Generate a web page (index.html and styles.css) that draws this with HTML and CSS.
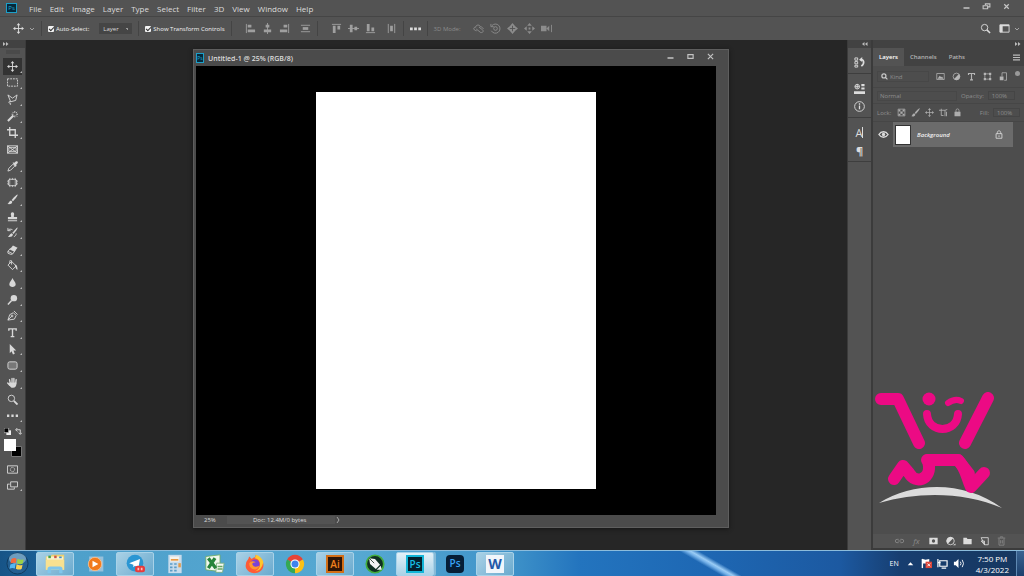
FILE: index.html
```
<!DOCTYPE html>
<html lang="en">
<head>
  <meta charset="UTF-8">
  <title>Untitled-1 @ 25% (RGB/8)</title>
  <link rel="stylesheet" href="styles.css">
</head>
<body>

  <header class="menubar">
    <span class="ps-logo">Ps</span>
    <nav class="menu">
      <button>File</button>
      <button>Edit</button>
      <button>Image</button>
      <button>Layer</button>
      <button>Type</button>
      <button>Select</button>
      <button>Filter</button>
      <button>3D</button>
      <button>View</button>
      <button>Window</button>
      <button>Help</button>
    </nav>
    <div class="window-buttons">
      <button aria-label="Minimize"><svg viewBox="0 0 12 12"><path d="M2 8h8" stroke-width="2"/></svg></button>
      <button aria-label="Restore"><svg viewBox="0 0 12 12"><path d="M4.500 4V2.500h6v4H8M1.500 5h6v4h-6z" stroke-width="1.500"/></svg></button>
      <button aria-label="Close"><svg viewBox="0 0 12 12"><path d="M3 3l6 6M9 3l-6 6" stroke-width="1.600"/></svg></button>
    </div>
  </header>

  <div class="options">
    <svg class="icon" viewBox="0 0 12 12"><path d="M6 2v8M2 6h8"/><path class="fill" d="M6 0l2 2.500H4zM6 12l2-2.500H4zM0 6l2.500-2v4zM12 6L9.500 4v4z"/></svg>
    <svg class="chevron" viewBox="0 0 6 6"><path d="M1 2l2 2 2-2"/></svg>
    <span class="sep"></span>
    <label class="check"><input type="checkbox" checked>Auto-Select:</label>
    <select class="target" aria-label="Auto-select target"><option>Layer</option><option>Group</option></select>
    <span class="sep"></span>
    <label class="check"><input type="checkbox" checked>Show Transform Controls</label>
    <span class="sep"></span>
    <div class="group align">
      <button aria-label="Align left"><svg class="icon" viewBox="0 0 12 12"><path d="M1.500 1v10"/><path class="fill" d="M3 2h4v3H3zM3 7h8v3H3z"/></svg></button>
      <button aria-label="Align centers"><svg class="icon" viewBox="0 0 12 12"><path d="M6 0v12"/><path class="fill" d="M4 2h4v3H4zM2 7h8v3H2z"/></svg></button>
      <button aria-label="Align right"><svg class="icon" viewBox="0 0 12 12"><path d="M10.500 1v10"/><path class="fill" d="M5 2h4v3H5zM1 7h8v3H1z"/></svg></button>
    </div>
    <button class="dim" aria-label="Distribute vertically"><svg class="icon" viewBox="0 0 12 12"><path d="M1 2.500h10M1 9.500h10"/><path class="fill" d="M3 4.500h6v3H3z"/></svg></button>
    <span class="sep"></span>
    <div class="group align">
      <button aria-label="Align top"><svg class="icon" viewBox="0 0 12 12"><path d="M1 1.500h10"/><path class="fill" d="M2 3h3v8H2zM7 3h3v4H7z"/></svg></button>
      <button aria-label="Align middles"><svg class="icon" viewBox="0 0 12 12"><path d="M0 6h12"/><path class="fill" d="M2 2h3v8H2zM7 4h3v4H7z"/></svg></button>
      <button aria-label="Align bottom"><svg class="icon" viewBox="0 0 12 12"><path d="M1 10.500h10"/><path class="fill" d="M2 1h3v8H2zM7 5h3v4H7z"/></svg></button>
    </div>
    <button class="dim" aria-label="Distribute horizontally"><svg class="icon" viewBox="0 0 12 12"><path d="M2.500 1v10M9.500 1v10"/><path class="fill" d="M4.500 3h3v6h-3z"/></svg></button>
    <span class="sep"></span>
    <button aria-label="More options"><svg class="icon" viewBox="0 0 12 12"><path class="fill" d="M0 5h3v3H0zM4.500 5h3v3h-3zM9 5h3v3H9z"/></svg></button>
    <span class="sep"></span>
    <span class="mode">3D Mode:</span>
    <div class="group modes">
      <svg class="icon" viewBox="0 0 12 12"><path d="M4 8.500C0 8 0 4.500 3 4.500c0-3 5-3 5 0M3.500 6.500l5 4c3 0 3-2 2-3l-4-3M8.500 3.500l3 3"/></svg>
      <svg class="icon" viewBox="0 0 12 12"><path d="M2 3a5 5 0 1 1-.5 5.500M1 1v3h3"/><circle cx="6" cy="6" r="2"/></svg>
      <svg class="icon" viewBox="0 0 12 12"><path class="fill" d="M6 0l2.500 3L9 3.500 12 6 9 8.500 6 12 3 8.500 0 6l3-2.500z"/><path class="cut" d="M6 3v6M3 6h6"/></svg>
      <svg class="icon" viewBox="0 0 12 12"><path class="fill" d="M6 0l2.500 3h-5zM6 12l2.500-3h-5zM0 6l3-2.500v5zM12 6L9 3.500v5zM5 5h2v2H5z"/></svg>
      <svg class="icon" viewBox="0 0 12 12"><path class="fill" d="M0 3h6v6H0zM6 6l3-3v6z"/><path d="M11.500 2v8"/></svg>
    </div>
    <div class="options-end">
      <button aria-label="Search"><svg class="icon" viewBox="0 0 12 12"><circle cx="5" cy="5" r="3.500"/><path d="M7.500 7.500L11 11" stroke-width="1.600"/></svg></button>
      <button aria-label="Workspace"><svg class="icon" viewBox="0 0 12 12"><path d="M1 2h10v8H1z"/><path class="fill" d="M1 2h10v1.500H1zM1 2h3v8H1z"/></svg></button>
      <svg class="chevron" viewBox="0 0 6 6"><path d="M1 2l2 2 2-2"/></svg>
    </div>
  </div>

  <main class="main">

    <aside class="toolbar">
      <div class="strip"><svg class="arrows" viewBox="0 0 6 6"><path d="M0 1l2.500 2L0 5zM3 1l2.500 2L3 5z"/></svg></div>
      <div class="grip"></div>
      <div class="tools">
        <button class="tool active" aria-label="Move"><svg class="icon" viewBox="0 0 12 12"><path d="M6 2v8M2 6h8"/><path class="fill" d="M6 0l2 2.500H4zM6 12l2-2.500H4zM0 6l2.500-2v4zM12 6L9.500 4v4z"/></svg></button>
        <button class="tool" aria-label="Marquee"><svg class="icon" viewBox="0 0 12 12"><path d="M.5 2h11v8H.5z" stroke-dasharray="2 1"/></svg></button>
        <button class="tool" aria-label="Lasso"><svg class="icon" viewBox="0 0 12 12"><path d="M1 1l5 3.500L11 1 9.500 7 4 8.500zM4 8.500c-2-1-3 1-1 1.500s1 1.500 0 2"/></svg></button>
        <button class="tool" aria-label="Magic wand"><svg class="icon" viewBox="0 0 12 12"><path d="M1 11l6-6" stroke-width="2.200"/><path d="M8.500 0v2M8.500 5v2M5 3.500h2M10 3.500h2M10 2l1-1M6 1l1 1M10 5l1 1"/></svg></button>
        <button class="tool" aria-label="Crop"><svg class="icon" viewBox="0 0 12 12"><path d="M3 0v9h9M0 3h9v9" stroke-width="1.400"/></svg></button>
        <button class="tool plain" aria-label="Frame"><svg class="icon" viewBox="0 0 12 12"><path d="M.5 2h11v8H.5zM.5 2l11 8M11.500 2L.5 10M2 4v4h8V4z"/></svg></button>
        <button class="tool" aria-label="Eyedropper"><svg class="icon" viewBox="0 0 12 12"><path d="M1 11l1-3 4.500-4.500 2 2L4 10z"/><path class="fill" d="M6 2l1-.500 1 .5 1.500-1.500c1.500-1 3 .5 2 2L10 4l.5 1-1 1.500z"/></svg></button>
        <button class="tool" aria-label="Patch"><svg class="icon" viewBox="0 0 12 12"><rect x="1.500" y="2.500" width="9" height="7" rx="2"/><path d="M3 1v10M6 1v2M6 9v2M9 1v10M0 4.500h2M0 7.500h2M10 4.500h2M10 7.500h2" stroke-width=".7"/></svg></button>
        <button class="tool" aria-label="Brush"><svg class="icon" viewBox="0 0 12 12"><path class="fill" d="M11.500.5c.8.6-2.500 5-5 7.500L5 6.500C7 4 11 0 11.500.5zM4.300 7l1.500 1.500C5.500 11 3 11.500.5 11 2 10 2 7.500 4.300 7z"/></svg></button>
        <button class="tool" aria-label="Stamp"><svg class="icon" viewBox="0 0 12 12"><path class="fill" d="M4.500 5C2.500 0 9.500 0 7.500 5v1.500H11V9H1V6.500h3.500zM1 10h10v1.200H1z"/></svg></button>
        <button class="tool" aria-label="History brush"><svg class="icon" viewBox="0 0 12 12"><path class="fill" d="M11.500.5c.8.6-2 4.500-4.500 7L5.800 6.300C8 4 11 0 11.500.5zM5 6.800l1.500 1.500c-.5 2.500-3 3-5.500 2.500C2.500 9.800 3 7.300 5 6.800z"/><path d="M1 4c1-2 3-2 5-1M1 1v3h3M10 7c0 2-1 3-2.500 3.500"/></svg></button>
        <button class="tool" aria-label="Eraser"><svg class="icon" viewBox="0 0 12 12"><path class="fill" d="M6.500 1.500L11.500 4 8 8.500 3 6z"/><path d="M4 4.500L1 8v2l3 1.300 2-.3 3-4M1 8l5 2.500"/></svg></button>
        <button class="tool" aria-label="Paint bucket"><svg class="icon" viewBox="0 0 12 12"><path d="M1 5.500l4-4 5 5L6 10.500zM3 4V1.500C3-.5 5 0 5 1.500V5"/><path class="fill" d="M9 5c2 1 2.500 3 2.500 5.500-2 0-1.500-2-3-4z"/></svg></button>
        <button class="tool" aria-label="Blur"><svg class="icon" viewBox="0 0 12 12"><path class="fill" d="M6 1c1 3 3.500 4 3.500 7 0 4-7 4-7 0C2.500 5 5 4 6 1z"/></svg></button>
        <button class="tool" aria-label="Dodge"><svg class="icon" viewBox="0 0 12 12"><circle class="fill" cx="7.500" cy="4.500" r="3.500"/><path d="M5 7l-4 4.500" stroke-width="1.600"/></svg></button>
        <button class="tool" aria-label="Pen"><svg class="icon" viewBox="0 0 12 12"><path d="M1 11l2-6 4-2 3 3-2 4zM1 11l4-4M7.500 1l4 4"/><circle cx="5.500" cy="6.500" r="1"/></svg></button>
        <button class="tool" aria-label="Type"><svg class="icon" viewBox="0 0 12 12"><path d="M2 4V2h8v2M6 2v8.500M4 10.500h4" stroke-width="1.500"/></svg></button>
        <button class="tool" aria-label="Path selection"><svg class="icon" viewBox="0 0 12 12"><path class="fill" d="M3 0l7 7H7l1.500 3.500-2 1L5 8l-2 2z"/></svg></button>
        <button class="tool" aria-label="Rectangle"><svg class="icon" viewBox="0 0 12 12"><rect x="1" y="2" width="10" height="8" rx="2" fill="#777"/></svg></button>
        <button class="tool" aria-label="Hand"><svg class="icon" viewBox="0 0 12 12"><path d="M3.500 7L2.800 3M5.500 6V1.500M7.500 6V1.500M9.500 7l.5-4M3 9L.8 6.500" stroke-width="1.500" stroke-linecap="round"/><path class="fill" d="M2 7.500l1-1.500h7.300C10.500 10 9 11.800 6.500 11.800S3 10 2 7.500z"/></svg></button>
        <button class="tool plain" aria-label="Zoom"><svg class="icon" viewBox="0 0 12 12"><circle cx="4.800" cy="4.800" r="3.500"/><path d="M7.500 7.500l4 4" stroke-width="2"/></svg></button>
        <button class="tool" aria-label="Edit toolbar"><svg class="icon" viewBox="0 0 12 12"><path class="fill" d="M0 5h2.500v2.500H0zM4.750 5h2.500v2.500h-2.500zM9.500 5H12v2.500H9.500z"/></svg></button>
      </div>
      <div class="swap">
        <svg class="mini" viewBox="0 0 6 6"><path d="M2 2h4v4H2z" fill="#eee"/><path d="M0 0h4v4H0z" fill="#000" stroke="#ccc" stroke-width=".6"/></svg>
        <svg class="mini" viewBox="0 0 6 6"><path d="M1 1.500h3.500V5M2 0L.5 1.500 2 3M3 4l1.500 1.500L6 4" fill="none" stroke="#ddd" stroke-width=".8"/></svg>
      </div>
      <svg class="swatches" viewBox="0 0 18 18"><path d="M7.500 7.500h10v10h-10z" fill="#000" stroke="#777"/><path d="M0 0h12v12H0z" fill="#fff"/></svg>
      <button class="tool plain" aria-label="Quick mask"><svg class="icon" viewBox="0 0 12 12"><path d="M.5 2h11v8H.5z"/><circle cx="6" cy="6" r="2.300" stroke-dasharray="1 .6"/></svg></button>
      <button class="tool" aria-label="Screen mode"><svg class="icon" viewBox="0 0 12 12"><path d="M4 2h7.500v5.500H4z"/><path d="M3 4.500H.5V10H8V8"/></svg></button>
    </aside>

    <section class="workspace">
      <article class="doc">
        <div class="doc-title">
          <span class="ps-logo small">Ps</span>
          <h1>Untitled-1 @ 25% (RGB/8)</h1>
          <div class="window-buttons">
            <button aria-label="Minimize document"><svg viewBox="0 0 12 12"><path d="M2 8h8" stroke-width="2"/></svg></button>
            <button aria-label="Maximize document"><svg viewBox="0 0 12 12"><path d="M2.500 3.500h7v5h-7z" stroke-width="1.500"/></svg></button>
            <button aria-label="Close document"><svg viewBox="0 0 12 12"><path d="M2.500 2.500l7 7M9.500 2.500l-7 7" stroke-width="1.500"/></svg></button>
          </div>
        </div>
        <div class="canvas"><div class="artboard"></div></div>
        <div class="doc-status">
          <span class="zoom">25%</span>
          <span class="size">Doc: 12.4M/0 bytes</span>
          <svg class="chevron" viewBox="0 0 6 6"><path d="M2 0l2 3-2 3"/></svg>
        </div>
      </article>
    </section>

    <aside class="dock">
      <div class="strip end"><svg class="arrows" viewBox="0 0 6 6"><path d="M2.500 1L0 3l2.500 2zM5.500 1L3 3l2.500 2z"/></svg></div>
      <div class="dock-group">
        <button aria-label="History"><svg class="icon" viewBox="0 0 12 12"><path d="M1 1h3v2.500H1zM1 5h3v2.500H1zM1 9h3v2H1z"/><path d="M7 3c4-1 5 4 1 7" stroke-width="1.800"/><path class="fill" d="M5.500 3L9 0v5.500z"/></svg></button>
      </div>
      <div class="dock-group">
        <button aria-label="Properties"><svg class="icon" viewBox="0 0 12 12"><circle cx="3.500" cy="4" r="2.500"/><path d="M1 4h5M3.500 1v5"/><path class="fill" d="M8 1h3.500v2.500H8zM8 5h3.500v2H8zM0 9h12v3H0z"/></svg></button>
        <button aria-label="Info"><svg class="icon" viewBox="0 0 12 12"><circle cx="6" cy="6" r="5.300"/><path d="M6 5v4M6 2.500v1.500" stroke-width="1.400"/></svg></button>
      </div>
      <div class="dock-group">
        <button aria-label="Character" class="letter caret">A</button>
        <button aria-label="Paragraph" class="letter pilcrow">¶</button>
      </div>
    </aside>

    <aside class="panel">
      <div class="strip end"><svg class="arrows" viewBox="0 0 6 6"><path d="M0 1l2.500 2L0 5zM3 1l2.500 2L3 5z"/></svg></div>
      <div class="tabs">
        <button class="tab active">Layers</button>
        <button class="tab">Channels</button>
        <button class="tab">Paths</button>
        <button class="panel-menu" aria-label="Panel menu"><svg class="mini" viewBox="0 0 6 6"><path d="M0 1h6M0 3h6M0 5h6" stroke="#bbb"/></svg></button>
      </div>
      <div class="row filter">
        <div class="kind">
          <svg class="mini" viewBox="0 0 12 12"><circle cx="5" cy="5" r="3.500" fill="none" stroke="#ccc" stroke-width="2"/><path d="M7.500 7.500L11 11" stroke="#ccc" stroke-width="2"/></svg>
          <select aria-label="Filter kind"><option>Kind</option></select>
        </div>
        <svg class="icon" viewBox="0 0 12 12"><path d="M1 2h10v8H1z"/><path class="fill" d="M2 9l3-4 2 2 1-1 2 3z"/></svg>
        <svg class="icon" viewBox="0 0 12 12"><circle cx="6" cy="6" r="4.500"/><path class="fill" d="M9.200 2.800a4.500 4.500 0 0 1-6.400 6.400z"/></svg>
        <svg class="icon" viewBox="0 0 12 12"><path d="M2 4V2h8v2M6 2v8.500M4 10.500h4" stroke-width="1.500"/></svg>
        <svg class="icon" viewBox="0 0 12 12"><path d="M2.500 2.500h7v7h-7z"/><path class="fill" d="M1 1h3v3H1zM8 1h3v3H8zM1 8h3v3H1zM8 8h3v3H8z"/></svg>
        <svg class="icon" viewBox="0 0 12 12"><path d="M4 6V1h6v10H7"/><path class="fill" d="M1 6h5v5H1z"/></svg>
        <span class="toggle"></span>
      </div>
      <div class="row blend">
        <select class="mode-select" aria-label="Blend mode" disabled><option>Normal</option></select>
        <label for="opacity">Opacity:</label>
        <input id="opacity" type="text" value="100%" disabled>
      </div>
      <div class="row locks">
        <span class="lock-label">Lock:</span>
        <svg class="icon" viewBox="0 0 12 12"><path d="M1.500 1.500h9v9h-9z"/><path class="fill" d="M2 2h2.500v2.500H2zM7.500 2H10v2.500H7.500zM4.500 4.500h3v3h-3zM2 7.500h2.500V10H2zM7.500 7.500H10V10H7.500z"/></svg>
        <svg class="icon" viewBox="0 0 12 12"><path class="fill" d="M11.500.5c.8.6-2.500 5-5 7.500L5 6.500C7 4 11 0 11.500.5zM4.300 7l1.500 1.500C5.500 11 3 11.500.5 11 2 10 2 7.500 4.300 7z"/></svg>
        <svg class="icon" viewBox="0 0 12 12"><path d="M6 2v8M2 6h8"/><path class="fill" d="M6 0l2 2.500H4zM6 12l2-2.500H4zM0 6l2.500-2v4zM12 6L9.500 4v4z"/></svg>
        <svg class="icon" viewBox="0 0 12 12"><path d="M0 3h8v8M3 1v9h3M8 3l3-1M10 5v6" stroke-width="1.200"/></svg>
        <svg class="icon" viewBox="0 0 12 12"><path d="M4 6V3c0-2.500 4-2.500 4 0v3"/><path class="fill" d="M2 5h8v6H2z"/></svg>
        <label for="fill">Fill:</label>
        <input id="fill" type="text" value="100%" disabled>
      </div>
      <div class="layer">
        <button class="eye" aria-label="Toggle visibility"><svg class="icon" viewBox="0 0 12 12"><path d="M1 6c2.500-4 7.500-4 10 0-2.500 4-7.500 4-10 0z" stroke-width="1.500"/><circle class="fill" cx="6" cy="6" r="1.800"/></svg></button>
        <div class="layer-body">
          <span class="thumb"></span>
          <span class="layer-name">Background</span>
          <svg class="icon" viewBox="0 0 12 12"><path d="M4 5V3.500c0-2.500 4-2.500 4 0V5M2.500 5h7v5.500h-7zM6 7v2"/></svg>
        </div>
      </div>
      <div class="panel-footer">
        <button class="off" aria-label="Link layers"><svg class="icon" viewBox="0 0 12 12"><path d="M5 4H3a2 2 0 0 0 0 4h2M7 4h2a2 2 0 0 1 0 4H7M4 6h4"/></svg></button>
        <button class="fx" aria-label="Layer style">fx</button>
        <button aria-label="Add mask"><svg class="icon" viewBox="0 0 12 12"><path class="fill" fill-rule="evenodd" d="M1 2h10v8H1zM8 6a2 2 0 1 0-4 0 2 2 0 1 0 4 0z"/></svg></button>
        <button aria-label="Adjustment layer"><svg class="icon" viewBox="0 0 12 12"><circle cx="6" cy="6" r="4.500"/><path class="fill" d="M9.200 2.800a4.500 4.500 0 0 0-6.400 6.400zM9 11h3V9z"/></svg></button>
        <button aria-label="New group"><svg class="icon" viewBox="0 0 12 12"><path class="fill" d="M1 2h4l1 1.500h5V10H1z"/></svg></button>
        <button aria-label="New layer"><svg class="icon" viewBox="0 0 12 12"><path d="M2 2h8.500v8.500H6zM6 10.500V6H2z"/></svg></button>
        <button class="off" aria-label="Delete layer"><svg class="icon" viewBox="0 0 12 12"><path d="M1.500 2.500h9M4.500 2V1h3v1M3 3v8h6V3M5 5v4M7 5v4"/></svg></button>
      </div>

      <svg class="watermark" viewBox="0 0 128 120">
        <path d="M4 111C40 89 90 89 127 116C90 100 44 99 4 111z" fill="#dcdcdc"/>
        <g fill="none" stroke="#ec0a84" stroke-width="12" stroke-linecap="round" stroke-linejoin="round">
          <path d="M6 7h17L44 51M113 6L90 51"/>
          <path d="M19 87L28 74L34 81C41 93 55 87 54 74L53 68H83C91 76 91 84 96 95L109 81"/>
          <path d="M52 68H83L94 82" />
          <path d="M52 22c1 20 30 20 31 0" stroke-width="8"/>
          <path d="M73 11q7-5 13-2" stroke-width="6"/>
        </g>
        <circle cx="54" cy="7" r="6.500" fill="#ec0a84"/>
      </svg>
    </aside>
  </main>

  <footer class="taskbar">
    <button class="start" aria-label="Start">
      <svg viewBox="0 0 24 24">
        <circle cx="12" cy="12" r="11" fill="#245f91" stroke="#123b5d"/>
        <ellipse cx="12" cy="7" rx="9" ry="6" fill="#9fc6dd" opacity=".6"/>
        <path d="M5.500 7.500q3-2 5.500-.5l-.8 4.500q-3-1-5.500.5z" fill="#f2693c"/>
        <path d="M12 7q3 2 6.500.5l-1 4.500q-3 1.500-6.300-.3z" fill="#98cf49"/>
        <path d="M4.500 13q3-1.500 5.500-.4l-.8 4.600q-3-1.200-5.500.4z" fill="#53b8f3"/>
        <path d="M11 12.700q3 2 6.300.5l-1 4.600q-3 1.300-6-.4z" fill="#fbd150"/>
      </svg>
    </button>
    <div class="tasks">
      <button class="task open" aria-label="Explorer"><svg viewBox="0 0 24 24"><path d="M1 3h6l1-2h15v18H1z" fill="#efcf6a"/><path d="M2 3h20v4H2z" fill="#fbf2ce"/><path d="M4 2h3v3H4z" fill="#44a148"/><path d="M11 2h3v3h-3z" fill="#cc5748"/><path d="M17 3h3v2h-3z" fill="#3c8fc9"/><path d="M1 7h22v12H1z" fill="#f8e190"/><path d="M3 23v-5q0-3 3-3h12q3 0 3 3v5h-4v-4H7v4z" fill="#7fc6ec"/></svg></button>
      <button class="task" aria-label="Media player"><svg viewBox="0 0 24 24"><path d="M5 3h17v18H5z" fill="#a9c9de" opacity=".8"/><circle cx="12" cy="12" r="8" fill="#f17a1d" stroke="#f9c391"/><path d="M9 8l7 4-7 4z" fill="#fff"/></svg></button>
      <button class="task open" aria-label="Telegram"><svg viewBox="0 0 24 24"><circle cx="12" cy="11" r="10" fill="#2a96d3"/><path d="M5 11l13-5-2 11-4-3-2 2v-3z" fill="#fff"/><rect x="12" y="14" width="12" height="8" rx="3" fill="#e83b3b"/><path d="M15 18h2M19 18h2" stroke="#fbb" stroke-width="3"/></svg></button>
      <button class="task" aria-label="Calculator"><svg viewBox="0 0 24 24"><path d="M4 1h16v22H4z" fill="#c8dcec"/><path d="M6 3h11v6H6z" fill="#f6f3ea"/><path d="M7 7h9" stroke="#e99842" stroke-width="2"/><path d="M6 12h3M11 12h3M6 16h3M11 16h3M6 20h3M11 20h3" stroke="#5b9cc6" stroke-width="2"/><path d="M16 11h3v5h-3z" fill="#df9b4a"/></svg></button>
      <button class="task" aria-label="Excel"><svg viewBox="0 0 24 24"><path d="M1 3l17-2v20L1 19z" fill="#f0f7ed" stroke="#6cab63"/><path d="M14 11h9l-2 11h-8z" fill="#f4faf3" stroke="#7cad79"/><path d="M15 15h6M15 18h6" stroke="#65a562" stroke-width="2"/><path d="M4 5l9 12M12 5L4 17" stroke="#27843c" stroke-width="4"/></svg></button>
      <button class="task open" aria-label="Firefox"><svg viewBox="0 0 24 24"><path d="M4 6l1-3 3 3q2-2 4-2l1-3q2 3 5 4 5 4 4 10c-2 10-18 11-21 1Q0 10 4 6z" fill="#ff5b36"/><path d="M13 1q7 2 9 9-2 10-10 11 6-3 6-8 0-7-6-8z" fill="#ffc72b"/><circle cx="12" cy="12" r="5.500" fill="#7a43d6"/><path d="M5 11q3-4 8-1-5 0-4 3 2 4 8 1-2 6-8 4-4-2-4-7z" fill="#ff982e"/></svg></button>
      <button class="task" aria-label="Chrome"><svg viewBox="0 0 24 24"><path d="M12 12L2.500 6.500a11 11 0 0 1 19 0z" fill="#e84335"/><path d="M12 12l9.500-5.500A11 11 0 0 1 12 23z" fill="#fbc116"/><path d="M12 12v11A11 11 0 0 1 2.500 6.500z" fill="#35a853"/><path d="M12 12h7L12 23z" fill="#fbc116"/><circle cx="12" cy="12" r="5.500" fill="#fff"/><circle cx="12" cy="12" r="4.200" fill="#3f83ee"/></svg></button>
      <button class="task open"><span class="app ai">Ai</span></button>
      <button class="task" aria-label="CorelDRAW"><svg viewBox="0 0 24 24"><circle cx="12" cy="12" r="10.500" fill="#102f22" stroke="#43ad3c" stroke-width="2"/><path d="M5 5l7 1 6 7-5 5-7-6z" fill="#f4f4f4"/><path d="M19 14l1 5-6 0z" fill="#f4f4f4"/><path d="M5 5l6 6" stroke="#22372d"/></svg></button>
      <button class="task open current"><span class="app pscc">Ps</span></button>
      <button class="task"><span class="app ps2">Ps</span></button>
      <button class="task open"><span class="app word">W</span></button>
    </div>
    <div class="glow"></div>
    <div class="tray">
      <span class="lang">EN</span>
      <svg class="icon" viewBox="0 0 12 12"><path class="fill" d="M3 8l3-3.500L9 8z"/></svg>
      <svg class="icon" viewBox="0 0 12 12"><path d="M1.500 1v10" stroke-width="1.500"/><path class="fill" d="M2 1l3 1 4-1v5H2z"/><rect x="5" y="4" width="7" height="7" fill="#dc463a" stroke="none"/><path d="M7 6l3 3M10 6L7 9"/></svg>
      <svg class="icon" viewBox="0 0 12 12"><path d="M3 3h8v6H3zM5 11h5M1 1v4h3M1 5v5" stroke-width="1.300"/></svg>
      <svg class="icon" viewBox="0 0 12 12"><path class="fill" d="M1 4h2l3-3v10L3 8H1z"/><path d="M8 4q1.500 2 0 4M10 2q3 4 0 8"/></svg>
      <time class="clock">7:50 PM<br>4/3/2022</time>
      <button class="show-desktop" aria-label="Show desktop"></button>
    </div>
  </footer>

</body>
</html>
```
FILE: styles.css
```
* {
  box-sizing: border-box;
}

body {
  margin: 0;
  height: 100vh;
  display: flex;
  flex-direction: column;
  overflow: hidden;
  background: #262626;
  color: #dcdcdc;
  font-family: "Open Sans", "Noto Sans", sans-serif;
  font-size: 6px;
}

button, input, select {
  font: inherit;
  color: inherit;
}

button {
  display: flex;
  align-items: center;
  justify-content: center;
  padding: 0;
  border: none;
  background: none;
}

select {
  appearance: none;
  border: none;
}

svg {
  display: block;
  flex: none;
}

.icon {
  width: 11px;
  height: 11px;
  fill: none;
  stroke: currentColor;
}

.icon .fill {
  fill: currentColor;
  stroke: none;
}

.icon .cut {
  stroke: #535353;
}

.chevron {
  width: 6px;
  height: 6px;
  fill: none;
  stroke: #a5a5a5;
}

.mini {
  width: 7px;
  height: 7px;
}

/* Menu bar */

.menubar {
  display: flex;
  align-items: center;
  height: 17px;
  flex: none;
  padding-left: 6px;
  background: #535353;
  border-bottom: 1px solid #454545;
}

.ps-logo {
  width: 11px;
  height: 10px;
  border: 1px solid #1b9fc9;
  background: #06283a;
  color: #28aed8;
  font-size: 6px;
  line-height: 8px;
  text-align: center;
}

.ps-logo.small {
  width: 8px;
  font-size: 5px;
}

.menu {
  display: flex;
  gap: 8px;
  margin-left: 12px;
  font-size: 8px;
  line-height: 15px;
}

.window-buttons {
  display: flex;
  margin-left: auto;
}

.window-buttons button {
  width: 20px;
  height: 12px;
}

.window-buttons svg {
  width: 9px;
  height: 9px;
  fill: none;
  stroke: #c4c4c4;
}

.menubar .window-buttons {
  padding: 0 8px 4px 0;
}

/* Options bar */

.options {
  display: flex;
  align-items: center;
  height: 23px;
  flex: none;
  padding-left: 13px;
  background: #535353;
}

.options .chevron {
  margin-left: 5px;
}

.sep {
  width: 1px;
  height: 15px;
  margin: 0 6px;
  background: #444;
}

.check {
  display: flex;
  align-items: center;
  gap: 2px;
  color: #f2f2f2;
}

.check input {
  appearance: none;
  display: grid;
  place-items: center;
  width: 6px;
  height: 6px;
  margin: 0;
  border-radius: 1px;
  background: #f2f2f2;
}

.check input:checked::before {
  content: "";
  width: 4px;
  height: 2px;
  border-left: 1px solid #333;
  border-bottom: 1px solid #333;
  transform: rotate(-45deg);
}

.target {
  width: 33px;
  height: 11px;
  margin-left: 10px;
  padding: 0 4px;
  background: #454545 linear-gradient(45deg, transparent 50%, #999 50%) no-repeat 27px 5px / 2px 2px;
}

.group {
  display: flex;
  gap: 6px;
}

.align,
.dim {
  color: #9f9f9f;
}

.options > .align {
  margin: 0 10px 0 7px;
}

.mode,
.modes {
  color: #8c8c8c;
}

.modes {
  margin-left: 12px;
}

.options-end {
  display: flex;
  align-items: center;
  gap: 8px;
  margin-left: auto;
  padding-right: 4px;
}

.options-end .chevron {
  margin-left: -4px;
}

/* Main area */

.main {
  display: flex;
  flex: 1;
  min-height: 0;
}

.strip {
  display: flex;
  align-items: center;
  flex: none;
  height: 8px;
  padding: 0 3px;
  background: #424242;
}

.strip.end {
  justify-content: flex-end;
}

.arrows {
  width: 6px;
  height: 6px;
  fill: #bdbdbd;
}

.toolbar {
  display: flex;
  flex-direction: column;
  align-items: center;
  width: 26px;
  background: #535353;
  border-right: 1px solid #3b3b3b;
}

.toolbar .strip {
  align-self: stretch;
}

.grip {
  width: 14px;
  height: 4px;
  margin: 2px 0 4px;
  background: #4a4a4a;
}

.tools {
  display: grid;
  grid-auto-rows: 1fr;
  height: 366px;
}

.tool {
  position: relative;
  width: 19px;
  min-height: 16px;
  color: #d8d8d8;
}

.tool.active {
  background: #333;
}

.tool::after {
  content: "";
  position: absolute;
  right: 0;
  bottom: 2px;
  border: 1px solid transparent;
  border-right-color: #bbb;
  border-bottom-color: #bbb;
}

.tool.plain::after {
  display: none;
}

.swap {
  display: flex;
  gap: 4px;
  margin: 4px 0;
}

.swatches {
  width: 18px;
  height: 18px;
  margin-bottom: 4px;
}

.workspace {
  position: relative;
  flex: 1;
  background: #262626;
}

/* Floating document window */

.doc {
  position: absolute;
  left: 167px;
  top: 9px;
  display: flex;
  flex-direction: column;
  width: 536px;
  height: 479px;
  padding: 0 2px 2px;
  border: 1px solid #5e5e5e;
  background: #4b4b4b;
  box-shadow: 0 1px 4px #151515;
}

.doc-title {
  display: flex;
  align-items: center;
  gap: 4px;
  height: 16px;
  flex: none;
}

.doc-title h1 {
  margin: 0;
  font-size: 7px;
  font-weight: 600;
}

.doc-title .window-buttons {
  padding: 0 6px 3px 0;
}

.canvas {
  flex: 1;
  display: grid;
  place-items: center;
  margin-right: 10px;
  background: #000;
}

.artboard {
  height: 397px;
  aspect-ratio: 280 / 397;
  background: #fff;
}

.doc-status {
  display: flex;
  align-items: center;
  height: 10px;
  flex: none;
}

.doc-status .zoom {
  width: 31px;
  padding-left: 8px;
}

.doc-status .size {
  width: 108px;
  padding-left: 26px;
  background: #535353;
}

/* Collapsed panels */

.dock {
  display: flex;
  flex-direction: column;
  width: 26px;
  background: #535353;
  border-left: 1px solid #3b3b3b;
  border-right: 2px solid #3b3b3b;
}

.dock-group {
  display: flex;
  flex-direction: column;
  align-items: center;
  gap: 7px;
  padding: 9px 0 5px;
  border-bottom: 1px solid #3e3e3e;
}

.letter {
  height: 11px;
  font-size: 11px;
  line-height: 11px;
}

.caret {
  border-right: 1px solid #dcdcdc;
}

.pilcrow {
  font-weight: 700;
}

/* Layers panel */

.panel {
  position: relative;
  display: flex;
  flex-direction: column;
  width: 151px;
  background: #4d4d4d;
  border-bottom: 2px solid #3b3b3b;
}

.tabs {
  display: flex;
  height: 18px;
  flex: none;
  background: #424242;
}

.tab {
  padding: 0 6px;
  color: #b3b3b3;
  font-weight: 600;
}

.tab.active {
  background: #535353;
  color: #fff;
}

.panel-menu {
  margin-left: auto;
  padding-right: 4px;
}

.row {
  display: flex;
  align-items: center;
  flex: none;
  height: 18px;
  padding: 0 4px;
  border-bottom: 1px solid #464646;
  color: #8f8f8f;
}

.row input {
  width: 27px;
  height: 9px;
  padding: 0 3px;
  border: 1px solid #454545;
  background: none;
}

.row select {
  padding: 0 2px;
  background: none;
}

.row .icon {
  width: 9px;
  height: 9px;
}

.row.filter {
  height: 22px;
  gap: 6px;
  justify-content: space-between;
}

.filter .icon {
  color: #b5b5b5;
}

.kind {
  display: flex;
  align-items: center;
  width: 52px;
  height: 11px;
  padding-left: 3px;
  border: 1px solid #474747;
}

.toggle {
  width: 5px;
  height: 5px;
  margin-bottom: 6px;
  border-radius: 50%;
  background: #999;
}

.row.blend,
.row.locks {
  gap: 4px;
}

.row.blend {
  height: 16px;
}

.row .mode-select {
  width: 80px;
  height: 10px;
  border: 1px solid #474747;
  opacity: 1;
}

.locks .icon {
  color: #adadad;
  margin-right: 1px;
}

.lock-label {
  margin-right: 2px;
}

.locks label {
  margin-left: auto;
}

.layer {
  display: flex;
  align-items: center;
  padding-right: 11px;
}

.eye {
  width: 20px;
}

.layer-body {
  display: flex;
  align-items: center;
  flex: 1;
  height: 25px;
  padding: 0 9px 0 2px;
  background: #6b6b6b;
}

.layer-body .icon {
  width: 10px;
  margin-left: auto;
}

.thumb {
  width: 16px;
  height: 20px;
  border: 1px solid #333;
  background: #fff;
}

.layer-name {
  margin-left: 6px;
  color: #f0f0f0;
  font-style: italic;
  font-weight: 600;
}

.panel-footer {
  display: flex;
  align-items: center;
  justify-content: flex-end;
  gap: 6px;
  height: 14px;
  margin-top: auto;
  padding-right: 17px;
  background: #535353;
}

.panel-footer .icon {
  width: 11px;
  height: 10px;
}

.off,
.fx {
  color: #8a8a8a;
}

.fx {
  width: 11px;
  font-size: 8px;
  font-style: italic;
  line-height: 8px;
}

.watermark {
  position: absolute;
  right: 21px;
  bottom: 36px;
  width: 128px;
  height: 120px;
}

/* Taskbar */

.taskbar {
  display: flex;
  align-items: center;
  height: 26px;
  flex: none;
  border-top: 1px solid #8bbcdc;
  background: linear-gradient(90deg, #175487 0, #1b5f95 36px, #4d9fca 38px, #56a8d2 360px, #3f93c9 510px, #2374be 580px, #1e68b4 700px, #1c59a1 840px, #173e70 900px, #17375f);
}

.start {
  width: 34px;
}

.start svg {
  width: 23px;
  height: 23px;
}

.tasks {
  display: flex;
  gap: 2px;
  margin-left: 2px;
}

.task {
  width: 38px;
  height: 24px;
  border: 1px solid transparent;
  border-radius: 2px;
}

.task.open {
  border-color: #a8d2e8;
  background: linear-gradient(135deg, #a9d1e6, #6aaace);
}

.task.current {
  background: linear-gradient(#e3f1f8, #a9d2e7);
  box-shadow: 2px 0 0 #86bbd8;
}

.task svg {
  width: 20px;
  height: 20px;
}

.app {
  width: 18px;
  height: 18px;
  font-size: 10px;
  font-weight: 600;
  line-height: 14px;
}

.ai {
  border: 2px solid #d36f17;
  background: #2d1506;
  color: #f0801d;
}

.pscc {
  border: 2px solid #13b5d7;
  background: #04202d;
  color: #16bfe3;
}

.ps2 {
  border-radius: 4px;
  background: #061e36;
  color: #39a4f5;
  line-height: 17px;
}

.word {
  background: #f1f6fb;
  color: #2458a8;
  font-size: 14px;
  font-weight: 700;
  line-height: 17px;
}

.glow {
  flex: 1;
  align-self: stretch;
  background: linear-gradient(30deg, transparent 42%, #73b0e8 47%, #9accf5 50%, transparent 56%) no-repeat 148px 0 / 100px 100%;
}

.tray {
  display: flex;
  align-items: center;
  gap: 5px;
  align-self: stretch;
  color: #fff;
}

.tray .icon {
  width: 11px;
  height: 11px;
}

.lang {
  margin-right: 1px;
  font-size: 7px;
}

.clock {
  margin: 0 2px 0 7px;
  font-size: 8px;
  line-height: 11px;
  text-align: center;
}

.show-desktop {
  width: 8px;
  height: 100%;
  border-left: 1px solid #5f89b3;
  background: linear-gradient(#3a6391, #1c3f6c);
}
```
